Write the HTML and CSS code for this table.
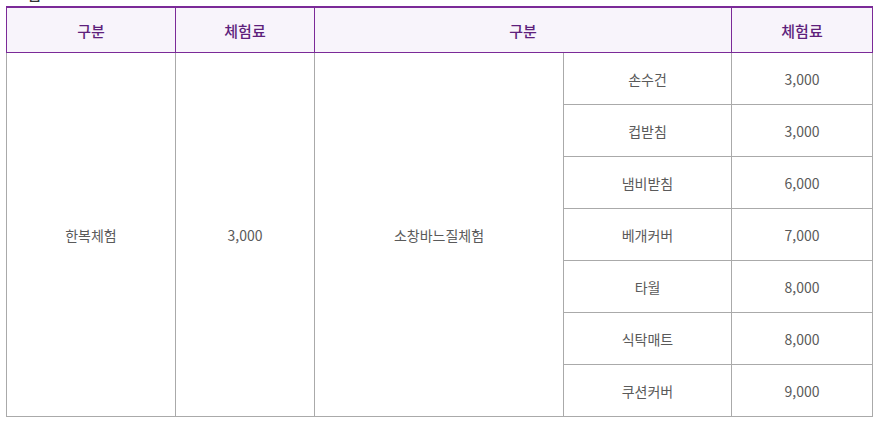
FILE: index.html
```html
<!DOCTYPE html>
<html lang="ko">
<head>
    <meta charset="UTF-8">
    <title>체험료</title>
    <link rel="stylesheet" href="styles.css">
</head>
<body>
    <div class="wrap">
        <h3 class="tit">요금</h3>
        <table class="price-table">
            <colgroup>
                <col class="c1">
                <col class="c2">
                <col class="c3">
                <col class="c4">
                <col class="c5">
            </colgroup>
            <thead>
                <tr>
                    <th>구분</th>
                    <th>체험료</th>
                    <th colspan="2">구분</th>
                    <th>체험료</th>
                </tr>
            </thead>
            <tbody>
                <tr>
                    <td rowspan="7">한복체험</td>
                    <td rowspan="7">3,000</td>
                    <td rowspan="7">소창바느질체험</td>
                    <td>손수건</td>
                    <td>3,000</td>
                </tr>
                <tr><td>컵받침</td><td>3,000</td></tr>
                <tr><td>냄비받침</td><td>6,000</td></tr>
                <tr><td>베개커버</td><td>7,000</td></tr>
                <tr><td>타월</td><td>8,000</td></tr>
                <tr><td>식탁매트</td><td>8,000</td></tr>
                <tr><td>쿠션커버</td><td>9,000</td></tr>
            </tbody>
        </table>
    </div>
</body>
</html>
```

FILE: styles.css
```css
body {
    margin: 0;
    background: #fff;
    font-family: "Noto Sans CJK KR", "Noto Sans", sans-serif;
}
.wrap {
    padding: 0 6px 0 6px;
}
.tit {
    margin: -17px 0 0 8px;
    height: 23px;
    font-size: 15px;
    font-weight: 500;
    color: #333;
}
.price-table {
    width: 866px;
    border-collapse: collapse;
    border-top: 2px solid #7b2a98;
    table-layout: fixed;
}
.c1 { width: 169px; }
.c2 { width: 139px; }
.c3 { width: 249px; }
.c4 { width: 168px; }
.c5 { width: 141px; }
.price-table th {
    height: 44px;
    padding: 0;
    border: 1px solid #7b2a98;
    border-top: none;
    background: #f8f4fb;
    color: #5e1f7c;
    font-size: 15px;
    font-weight: 500;
    text-align: center;
}
.price-table td {
    height: 51px;
    padding: 0;
    border: 1px solid #aaa;
    color: #5a5a5a;
    font-size: 14px;
    text-align: center;
}
.price-table tbody tr:first-child td {
    border-top: none;
}
```
